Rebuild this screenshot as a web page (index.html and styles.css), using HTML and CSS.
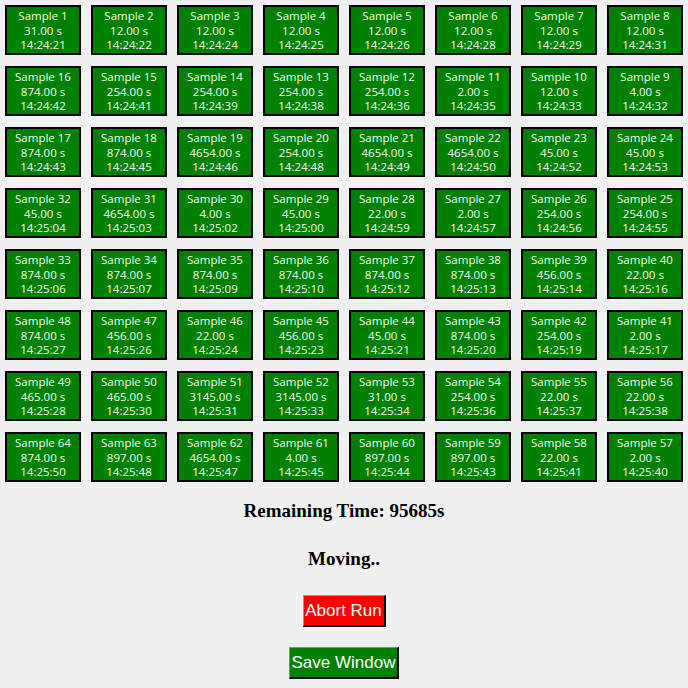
FILE: index.html
```html
<!DOCTYPE html>
<html>
<head>
<meta charset="utf-8">
<link rel="stylesheet" href="styles.css">
</head>
<body>
<div class="grid">
<div class="cell">Sample 1<br>31.00 s<br>14:24:21</div>
<div class="cell">Sample 2<br>12.00 s<br>14:24:22</div>
<div class="cell">Sample 3<br>12.00 s<br>14:24:24</div>
<div class="cell">Sample 4<br>12.00 s<br>14:24:25</div>
<div class="cell">Sample 5<br>12.00 s<br>14:24:26</div>
<div class="cell">Sample 6<br>12.00 s<br>14:24:28</div>
<div class="cell">Sample 7<br>12.00 s<br>14:24:29</div>
<div class="cell">Sample 8<br>12.00 s<br>14:24:31</div>

<div class="cell">Sample 16<br>874.00 s<br>14:24:42</div>
<div class="cell">Sample 15<br>254.00 s<br>14:24:41</div>
<div class="cell">Sample 14<br>254.00 s<br>14:24:39</div>
<div class="cell">Sample 13<br>254.00 s<br>14:24:38</div>
<div class="cell">Sample 12<br>254.00 s<br>14:24:36</div>
<div class="cell">Sample 11<br>2.00 s<br>14:24:35</div>
<div class="cell">Sample 10<br>12.00 s<br>14:24:33</div>
<div class="cell">Sample 9<br>4.00 s<br>14:24:32</div>

<div class="cell">Sample 17<br>874.00 s<br>14:24:43</div>
<div class="cell">Sample 18<br>874.00 s<br>14:24:45</div>
<div class="cell">Sample 19<br>4654.00 s<br>14:24:46</div>
<div class="cell">Sample 20<br>254.00 s<br>14:24:48</div>
<div class="cell">Sample 21<br>4654.00 s<br>14:24:49</div>
<div class="cell">Sample 22<br>4654.00 s<br>14:24:50</div>
<div class="cell">Sample 23<br>45.00 s<br>14:24:52</div>
<div class="cell">Sample 24<br>45.00 s<br>14:24:53</div>

<div class="cell">Sample 32<br>45.00 s<br>14:25:04</div>
<div class="cell">Sample 31<br>4654.00 s<br>14:25:03</div>
<div class="cell">Sample 30<br>4.00 s<br>14:25:02</div>
<div class="cell">Sample 29<br>45.00 s<br>14:25:00</div>
<div class="cell">Sample 28<br>22.00 s<br>14:24:59</div>
<div class="cell">Sample 27<br>2.00 s<br>14:24:57</div>
<div class="cell">Sample 26<br>254.00 s<br>14:24:56</div>
<div class="cell">Sample 25<br>254.00 s<br>14:24:55</div>

<div class="cell">Sample 33<br>874.00 s<br>14:25:06</div>
<div class="cell">Sample 34<br>874.00 s<br>14:25:07</div>
<div class="cell">Sample 35<br>874.00 s<br>14:25:09</div>
<div class="cell">Sample 36<br>874.00 s<br>14:25:10</div>
<div class="cell">Sample 37<br>874.00 s<br>14:25:12</div>
<div class="cell">Sample 38<br>874.00 s<br>14:25:13</div>
<div class="cell">Sample 39<br>456.00 s<br>14:25:14</div>
<div class="cell">Sample 40<br>22.00 s<br>14:25:16</div>

<div class="cell">Sample 48<br>874.00 s<br>14:25:27</div>
<div class="cell">Sample 47<br>456.00 s<br>14:25:26</div>
<div class="cell">Sample 46<br>22.00 s<br>14:25:24</div>
<div class="cell">Sample 45<br>456.00 s<br>14:25:23</div>
<div class="cell">Sample 44<br>45.00 s<br>14:25:21</div>
<div class="cell">Sample 43<br>874.00 s<br>14:25:20</div>
<div class="cell">Sample 42<br>254.00 s<br>14:25:19</div>
<div class="cell">Sample 41<br>2.00 s<br>14:25:17</div>

<div class="cell">Sample 49<br>465.00 s<br>14:25:28</div>
<div class="cell">Sample 50<br>465.00 s<br>14:25:30</div>
<div class="cell">Sample 51<br>3145.00 s<br>14:25:31</div>
<div class="cell">Sample 52<br>3145.00 s<br>14:25:33</div>
<div class="cell">Sample 53<br>31.00 s<br>14:25:34</div>
<div class="cell">Sample 54<br>254.00 s<br>14:25:36</div>
<div class="cell">Sample 55<br>22.00 s<br>14:25:37</div>
<div class="cell">Sample 56<br>22.00 s<br>14:25:38</div>

<div class="cell">Sample 64<br>874.00 s<br>14:25:50</div>
<div class="cell">Sample 63<br>897.00 s<br>14:25:48</div>
<div class="cell">Sample 62<br>4654.00 s<br>14:25:47</div>
<div class="cell">Sample 61<br>4.00 s<br>14:25:45</div>
<div class="cell">Sample 60<br>897.00 s<br>14:25:44</div>
<div class="cell">Sample 59<br>897.00 s<br>14:25:43</div>
<div class="cell">Sample 58<br>22.00 s<br>14:25:41</div>
<div class="cell">Sample 57<br>2.00 s<br>14:25:40</div>
</div>
<div class="status">
<div class="label">Remaining Time: 95685s</div>
<div class="label moving">Moving..</div>
<button class="btn abort">Abort Run</button>
<button class="btn save">Save Window</button>
</div>
</body>
</html>
```
FILE: styles.css
```css
html, body {
  margin: 0;
  background: #f0f0f0;
}
body {
  padding: 5px;
  width: 678px;
}
.grid {
  display: grid;
  grid-template-columns: repeat(8, 76px);
  grid-auto-rows: 50px;
  column-gap: 10px;
  row-gap: 11px;
}
.cell {
  box-sizing: border-box;
  border: 2px solid #000;
  background: #008000;
  color: #f4fff0;
  font-family: "Open Sans", "DejaVu Sans", sans-serif;
  font-size: 11.5px;
  line-height: 14.5px;
  text-align: center;
  padding-top: 2px;
  white-space: nowrap;
}
.status {
  display: flex;
  flex-direction: column;
  align-items: center;
  padding-top: 17px;
}
.label {
  font-family: "Liberation Serif", serif;
  font-weight: bold;
  font-size: 19px;
  line-height: 24px;
  color: #000;
}
.moving {
  margin-top: 24px;
}
.btn {
  box-sizing: border-box;
  font-family: "Liberation Sans", Arial, sans-serif;
  font-size: 17px;
  line-height: 20px;
  color: #fff;
  height: 32px;
  padding: 0;
  white-space: nowrap;
  border-style: solid;
  border-width: 1px 2px 2px 1px;
  cursor: default;
}
.abort {
  margin-top: 24px;
  background: #ff0000;
  border-color: #ff7070 #000 #000 #ff7070;
  width: 83px;
}
.save {
  margin-top: 20px;
  background: #008000;
  border-color: #50b050 #000 #000 #50b050;
  width: 110px;
}
```
